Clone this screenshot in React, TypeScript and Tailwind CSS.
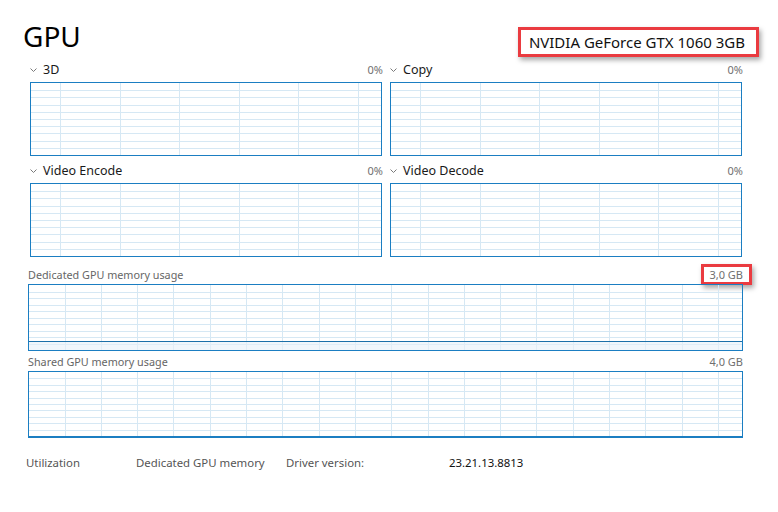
import React from "react";

const GRID = "#d6e8f4";

function Grid({ w, h, offset, step, rows }: { w: number; h: number; offset: number; step: number; rows: number }) {
  const vs: number[] = [];
  for (let x = offset; x < w; x += step) vs.push(Math.round(x) + 0.5);
  const hs: number[] = [];
  for (let i = 1; i < rows; i++) hs.push(Math.round((h * i) / rows) + 0.5);
  return (
    <svg width={w} height={h} className="block">
      {vs.map((x) => (
        <line key={"v" + x} x1={x} x2={x} y1={0} y2={h} stroke={GRID} strokeWidth={1} />
      ))}
      {hs.map((y) => (
        <line key={"h" + y} x1={0} x2={w} y1={y} y2={y} stroke={GRID} strokeWidth={1} />
      ))}
    </svg>
  );
}

function Chevron() {
  return (
    <svg width="7" height="6" viewBox="0 0 7 6" className="mr-[6px]">
      <polyline points="0.5,1.5 3.5,4.5 6.5,1.5" fill="none" stroke="#7a7a7a" strokeWidth="1" />
    </svg>
  );
}

function Engine({ name }: { name: string }) {
  return (
    <div className="flex flex-col">
      <div className="flex h-[20px] items-center justify-between">
        <div className="flex items-center">
          <Chevron />
          <span className="text-[12.5px] text-[#1a1a1a]">{name}</span>
        </div>
        <span className="mr-[-1px] text-[11px] text-[#707070]">0%</span>
      </div>
      <div className="mt-[2px] h-[74px] border border-[#1b7ec2] bg-white">
        <Grid w={350} h={72} offset={29} step={59.6} rows={10} />
      </div>
    </div>
  );
}

export default function App() {
  return (
    <div className="h-[512px] w-[778px] bg-white" style={{ fontFamily: '"Noto Sans", "Open Sans", sans-serif' }}>
      <div className="flex items-start justify-between pl-[23px] pr-[19px] pt-[16px]">
        <h1 className="text-[28px] leading-[40px] text-black">GPU</h1>
        <div className="mt-[11px] border-[3px] border-[#ea3b40] pl-[8px] pr-[11px] shadow-[2px_3px_5px_rgba(0,0,0,0.35)]">
          <span className="text-[15px] leading-[23px] text-[#111]">NVIDIA GeForce GTX 1060 3GB</span>
        </div>
      </div>

      <div className="ml-[30px] mt-[3px] grid w-[712px] grid-cols-2 gap-x-[8px] gap-y-[5px]">
        <Engine name="3D" />
        <Engine name="Copy" />
        <Engine name="Video Encode" />
        <Engine name="Video Decode" />
      </div>

      <div className="ml-[28px] w-[715px]">
        <div className="mt-[9px] flex h-[18px] items-center justify-between">
          <span className="text-[10.8px] text-[#666]">Dedicated GPU memory usage</span>
          <span className="relative text-[11px] text-[#707070]">
            3,0 GB
            <span className="absolute left-[-8px] right-[-9px] top-[-3px] bottom-[-2px] border-[3px] border-[#ea3b40] shadow-[2px_3px_5px_rgba(0,0,0,0.35)]" />
          </span>
        </div>
        <div className="relative h-[67px] border border-[#1b7ec2]">
          <Grid w={713} h={65} offset={35.5} step={36.3} rows={10} />
          <div className="absolute bottom-0 left-0 right-0 h-[9px] border-t border-[#1b6fa8] bg-[#e6f0f8]/60" />
        </div>

        <div className="mt-[2px] flex h-[18px] items-center justify-between">
          <span className="text-[10.8px] text-[#666]">Shared GPU memory usage</span>
          <span className="text-[11px] text-[#707070]">4,0 GB</span>
        </div>
        <div className="h-[67px] border border-b-2 border-[#1b7ec2]">
          <Grid w={713} h={64} offset={35.5} step={36.3} rows={10} />
        </div>
      </div>

      <div className="mt-[16px] flex h-[18px] items-center text-[11.4px]">
        <span className="ml-[26px] w-[110px] text-[#555]">Utilization</span>
        <span className="w-[150px] text-[#555]">Dedicated GPU memory</span>
        <span className="w-[163px] text-[#555]">Driver version:</span>
        <span className="text-[#111]">23.21.13.8813</span>
      </div>
    </div>
  );
}
